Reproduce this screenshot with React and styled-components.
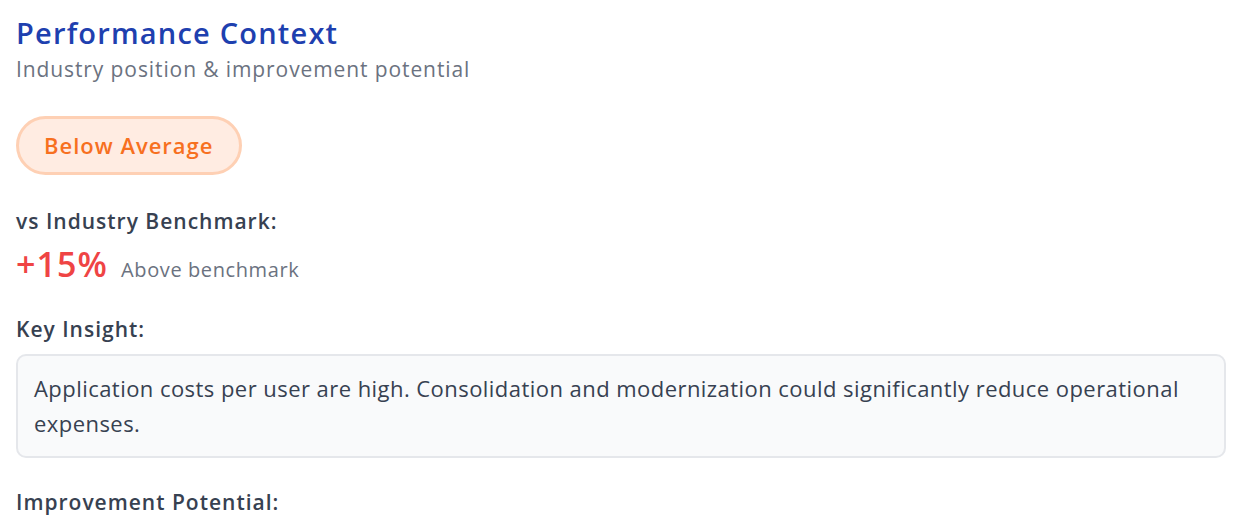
import React from "react";
import styled, { createGlobalStyle } from "styled-components";

const GlobalStyle = createGlobalStyle`
  body {
    margin: 0;
    background: #ffffff;
    font-family: "Open Sans", "Noto Sans", sans-serif;
  }
`;

const Panel = styled.div`
  width: 1210px;
  padding: 15px 24px 0 16px;
`;

const Header = styled.div`
  display: flex;
  flex-direction: column;
  gap: 4px;
`;

const Title = styled.h2`
  margin: 0;
  font-size: 29px;
  line-height: 36px;
  font-weight: 600;
  color: #1e40af;
  letter-spacing: 1.2px;
`;

const Subtitle = styled.p`
  margin: 0;
  font-size: 21px;
  line-height: 28px;
  color: #6b7280;
  letter-spacing: 0.9px;
`;

const Badge = styled.div`
  display: inline-flex;
  align-self: flex-start;
  margin-top: 29px;
  padding: 13px 25px 14px;
  border: 3px solid #fed0b4;
  border-radius: 999px;
  background: #ffece2;
  color: #f7701f;
  font-size: 22px;
  line-height: 26px;
  font-weight: 600;
  letter-spacing: 1px;
`;

const Section = styled.div`
  margin-top: ${(p) => p.$gap || 32}px;
  display: flex;
  flex-direction: column;
`;

const Label = styled.div`
  font-size: 21px;
  line-height: 28px;
  font-weight: 600;
  color: #374151;
  letter-spacing: 1px;
`;

const ValueRow = styled.div`
  margin-top: 9px;
  display: flex;
  align-items: baseline;
  gap: 13px;
`;

const Value = styled.span`
  font-size: 34px;
  line-height: 40px;
  font-weight: 600;
  color: ${(p) => p.$color};
  letter-spacing: 1.1px;
`;

const Note = styled.span`
  font-size: 20px;
  color: #6b7280;
  letter-spacing: 0.6px;
`;

const InsightBox = styled.div`
  margin-top: 11px;
  padding: 15px 16px;
  border: 2px solid #e5e7eb;
  border-radius: 10px;
  background: #f9fafb;
  color: #374151;
  font-size: 22px;
  line-height: 35px;
  letter-spacing: 0.45px;
`;

export default function App() {
  return (
    <>
      <GlobalStyle />
      <Panel>
        <Header>
          <Title>Performance Context</Title>
          <Subtitle>Industry position &amp; improvement potential</Subtitle>
          <Badge>Below Average</Badge>
        </Header>

        <Section $gap={32}>
          <Label>vs Industry Benchmark:</Label>
          <ValueRow>
            <Value $color="#ef4444">+15%</Value>
            <Note>Above benchmark</Note>
          </ValueRow>
        </Section>

        <Section $gap={31}>
          <Label>Key Insight:</Label>
          <InsightBox>
            Application costs per user are high. Consolidation and modernization could
            significantly reduce operational expenses.
          </InsightBox>
        </Section>

        <Section $gap={30}>
          <Label>Improvement Potential:</Label>
        </Section>
      </Panel>
    </>
  );
}
